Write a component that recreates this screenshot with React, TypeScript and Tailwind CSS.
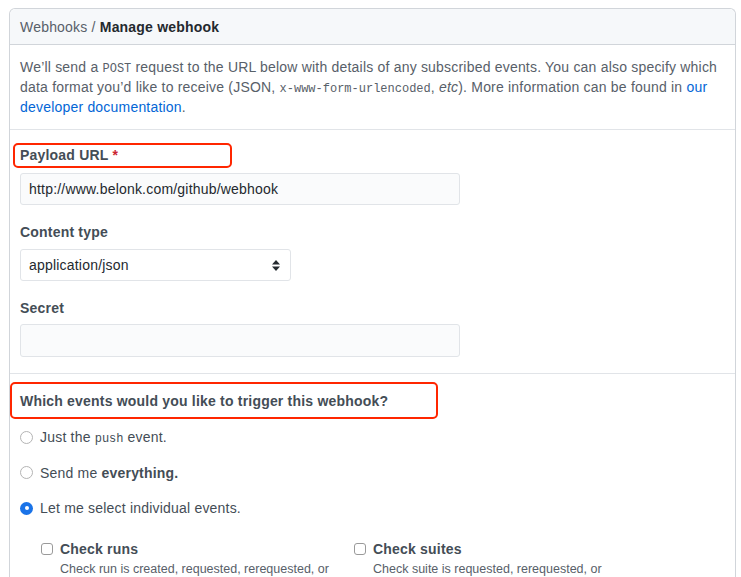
import React from "react";

const font = { fontFamily: '"Liberation Sans", Arial, sans-serif' };

function Annotation({ className }: { className: string }) {
  return <div className={`pointer-events-none absolute rounded-[5px] border-2 border-[#ff2600] ${className}`} />;
}

function Radio({ checked }: { checked?: boolean }) {
  return checked ? (
    <span className="flex h-[13px] w-[13px] shrink-0 items-center justify-center rounded-full bg-[#1a73e8]">
      <span className="h-[4px] w-[4px] rounded-full bg-white" />
    </span>
  ) : (
    <span className="h-[13px] w-[13px] shrink-0 rounded-full border border-[#b4b4b4] bg-white" />
  );
}

function Checkbox() {
  return <span className="mt-[4px] h-[12px] w-[12px] shrink-0 rounded-[3px] border border-[#9a9a9a] bg-white" />;
}

export default function App() {
  const mono = "font-['Liberation_Mono',monospace] text-[12px] leading-none tracking-normal";

  return (
    <div
      className="min-h-screen bg-white pl-[9px] pt-[8px] text-[14px] leading-[20px] tracking-[0.2px] text-[#586069]"
      style={font}
    >
      <div className="w-[727px] rounded-t-md border border-b-0 border-[#d1d5da]">
        {/* Header */}
        <div className="flex h-[36px] items-center rounded-t-md border-b border-[#d1d5da] bg-[#f6f8fa] px-[10px]">
          <span className="text-[#586069]">Webhooks /&nbsp;</span>
          <span className="font-bold text-[#24292e]">Manage webhook</span>
        </div>

        {/* Description */}
        <div className="border-b border-[#e1e4e8] px-[10px] pb-[12px] pt-[12px]">
          We’ll send a <span className={mono}>POST</span> request to the URL below with details of any subscribed
          events. You can also specify which
          <br />
          data format you’d like to receive (JSON, <span className={mono}>x-www-form-urlencoded</span>,{" "}
          <em>etc</em>). More information can be found in <a className="text-[#0366d6]">our</a>
          <br />
          <a className="text-[#0366d6]">developer documentation</a>.
        </div>

        {/* Form */}
        <div className="border-b border-[#e1e4e8] px-[10px] pb-[16px] pt-[15px]">
          <div className="relative font-bold text-[#444d56]">
            Payload URL <span className="text-[#cb2431]">*</span>
            <Annotation className="-left-[7px] -top-[2px] h-[25px] w-[219px]" />
          </div>
          <div className="mt-[8px] flex h-[32px] w-[440px] items-center rounded-[3px] border border-[#e1e4e8] bg-[#fafbfc] px-[8px] text-[#24292e]">
            http://www.belonk.com/github/webhook
          </div>

          <div className="mt-[17px] font-bold text-[#444d56]">Content type</div>
          <div className="mt-[7px] flex h-[32px] w-[271px] items-center justify-between rounded-[3px] border border-[#e1e4e8] bg-white pl-[8px] pr-[10px] text-[#24292e]">
            <span>application/json</span>
            <svg width="8" height="11" viewBox="0 0 8 11">
              <path d="M4 0 L8 4.5 H0 Z" fill="#24292e" />
              <path d="M4 11 L8 6.5 H0 Z" fill="#24292e" />
            </svg>
          </div>

          <div className="mt-[17px] font-bold text-[#444d56]">Secret</div>
          <div className="mt-[6px] h-[33px] w-[440px] rounded-[3px] border border-[#e1e4e8] bg-[#fafbfc]" />
        </div>

        {/* Events */}
        <div className="px-[10px] pt-[17px]">
          <div className="relative font-bold text-[#444d56]">
            Which events would you like to trigger this webhook?
            <Annotation className="-left-[10px] -top-[9px] h-[37px] w-[428px]" />
          </div>

          <div className="mt-[16px] flex flex-col gap-[15.5px] text-[#444d56]">
            <label className="flex items-center gap-[7px]">
              <Radio />
              <span>
                Just the <span className={mono}>push</span> event.
              </span>
            </label>
            <label className="flex items-center gap-[7px]">
              <Radio />
              <span>
                Send me <span className="font-bold">everything.</span>
              </span>
            </label>
            <label className="flex items-center gap-[7px]">
              <Radio checked />
              <span>Let me select individual events.</span>
            </label>
          </div>

          <div className="mt-[21px] grid w-[640px] grid-cols-[313px_313px] pl-[21px]">
            <div className="flex gap-[7px]">
              <Checkbox />
              <div>
                <div className="font-bold text-[#444d56]">Check runs</div>
                <div className="text-[12.5px] tracking-normal text-[#586069]">
                  Check run is created, requested, rerequested, or
                </div>
              </div>
            </div>
            <div className="flex gap-[7px]">
              <Checkbox />
              <div>
                <div className="font-bold text-[#444d56]">Check suites</div>
                <div className="text-[12.5px] tracking-normal text-[#586069]">
                  Check suite is requested, rerequested, or
                </div>
              </div>
            </div>
          </div>
        </div>
      </div>
    </div>
  );
}
